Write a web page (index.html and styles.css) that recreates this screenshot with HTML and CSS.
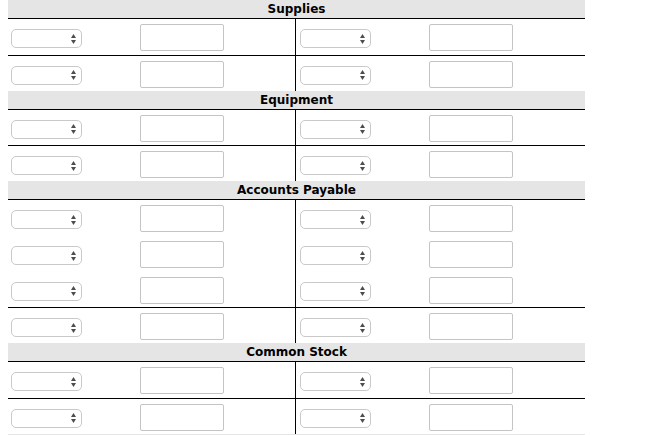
FILE: index.html
```html
<!DOCTYPE html>
<html lang="en">
<head>
<meta charset="utf-8">
<title>Journal entries</title>
<link rel="stylesheet" href="styles.css">
</head>
<body>
<div class="sheet">
  <section class="account">
    <div class="acct-head">Supplies</div>
    <div class="line">
      <div class="half"><div class="picker"><svg class="arrows" viewBox="0 0 5 10" width="5" height="10"><path d="M0 4 L2.5 0 L5 4 Z M0 6 L5 6 L2.5 10 Z"/></svg></div><input class="amount" type="text"></div>
      <div class="half"><div class="picker"><svg class="arrows" viewBox="0 0 5 10" width="5" height="10"><path d="M0 4 L2.5 0 L5 4 Z M0 6 L5 6 L2.5 10 Z"/></svg></div><input class="amount" type="text"></div>
    </div>
    <div class="line rule">
      <div class="half"><div class="picker"><svg class="arrows" viewBox="0 0 5 10" width="5" height="10"><path d="M0 4 L2.5 0 L5 4 Z M0 6 L5 6 L2.5 10 Z"/></svg></div><input class="amount" type="text"></div>
      <div class="half"><div class="picker"><svg class="arrows" viewBox="0 0 5 10" width="5" height="10"><path d="M0 4 L2.5 0 L5 4 Z M0 6 L5 6 L2.5 10 Z"/></svg></div><input class="amount" type="text"></div>
    </div>
  </section>

  <section class="account">
    <div class="acct-head">Equipment</div>
    <div class="line">
      <div class="half"><div class="picker"><svg class="arrows" viewBox="0 0 5 10" width="5" height="10"><path d="M0 4 L2.5 0 L5 4 Z M0 6 L5 6 L2.5 10 Z"/></svg></div><input class="amount" type="text"></div>
      <div class="half"><div class="picker"><svg class="arrows" viewBox="0 0 5 10" width="5" height="10"><path d="M0 4 L2.5 0 L5 4 Z M0 6 L5 6 L2.5 10 Z"/></svg></div><input class="amount" type="text"></div>
    </div>
    <div class="line rule">
      <div class="half"><div class="picker"><svg class="arrows" viewBox="0 0 5 10" width="5" height="10"><path d="M0 4 L2.5 0 L5 4 Z M0 6 L5 6 L2.5 10 Z"/></svg></div><input class="amount" type="text"></div>
      <div class="half"><div class="picker"><svg class="arrows" viewBox="0 0 5 10" width="5" height="10"><path d="M0 4 L2.5 0 L5 4 Z M0 6 L5 6 L2.5 10 Z"/></svg></div><input class="amount" type="text"></div>
    </div>
  </section>

  <section class="account">
    <div class="acct-head">Accounts Payable</div>
    <div class="line">
      <div class="half"><div class="picker"><svg class="arrows" viewBox="0 0 5 10" width="5" height="10"><path d="M0 4 L2.5 0 L5 4 Z M0 6 L5 6 L2.5 10 Z"/></svg></div><input class="amount" type="text"></div>
      <div class="half"><div class="picker"><svg class="arrows" viewBox="0 0 5 10" width="5" height="10"><path d="M0 4 L2.5 0 L5 4 Z M0 6 L5 6 L2.5 10 Z"/></svg></div><input class="amount" type="text"></div>
    </div>
    <div class="line">
      <div class="half"><div class="picker"><svg class="arrows" viewBox="0 0 5 10" width="5" height="10"><path d="M0 4 L2.5 0 L5 4 Z M0 6 L5 6 L2.5 10 Z"/></svg></div><input class="amount" type="text"></div>
      <div class="half"><div class="picker"><svg class="arrows" viewBox="0 0 5 10" width="5" height="10"><path d="M0 4 L2.5 0 L5 4 Z M0 6 L5 6 L2.5 10 Z"/></svg></div><input class="amount" type="text"></div>
    </div>
    <div class="line">
      <div class="half"><div class="picker"><svg class="arrows" viewBox="0 0 5 10" width="5" height="10"><path d="M0 4 L2.5 0 L5 4 Z M0 6 L5 6 L2.5 10 Z"/></svg></div><input class="amount" type="text"></div>
      <div class="half"><div class="picker"><svg class="arrows" viewBox="0 0 5 10" width="5" height="10"><path d="M0 4 L2.5 0 L5 4 Z M0 6 L5 6 L2.5 10 Z"/></svg></div><input class="amount" type="text"></div>
    </div>
    <div class="line rule">
      <div class="half"><div class="picker"><svg class="arrows" viewBox="0 0 5 10" width="5" height="10"><path d="M0 4 L2.5 0 L5 4 Z M0 6 L5 6 L2.5 10 Z"/></svg></div><input class="amount" type="text"></div>
      <div class="half"><div class="picker"><svg class="arrows" viewBox="0 0 5 10" width="5" height="10"><path d="M0 4 L2.5 0 L5 4 Z M0 6 L5 6 L2.5 10 Z"/></svg></div><input class="amount" type="text"></div>
    </div>
  </section>

  <section class="account">
    <div class="acct-head">Common Stock</div>
    <div class="line">
      <div class="half"><div class="picker"><svg class="arrows" viewBox="0 0 5 10" width="5" height="10"><path d="M0 4 L2.5 0 L5 4 Z M0 6 L5 6 L2.5 10 Z"/></svg></div><input class="amount" type="text"></div>
      <div class="half"><div class="picker"><svg class="arrows" viewBox="0 0 5 10" width="5" height="10"><path d="M0 4 L2.5 0 L5 4 Z M0 6 L5 6 L2.5 10 Z"/></svg></div><input class="amount" type="text"></div>
    </div>
    <div class="line rule">
      <div class="half"><div class="picker"><svg class="arrows" viewBox="0 0 5 10" width="5" height="10"><path d="M0 4 L2.5 0 L5 4 Z M0 6 L5 6 L2.5 10 Z"/></svg></div><input class="amount" type="text"></div>
      <div class="half"><div class="picker"><svg class="arrows" viewBox="0 0 5 10" width="5" height="10"><path d="M0 4 L2.5 0 L5 4 Z M0 6 L5 6 L2.5 10 Z"/></svg></div><input class="amount" type="text"></div>
    </div>
  </section>

  <section class="account">
    <div class="acct-head">&nbsp;</div>
  </section>
</div>
</body>
</html>
```

FILE: styles.css
```css
html, body {
  margin: 0;
  padding: 0;
  background: #ffffff;
}

body {
  padding: 0 8px;
  font-family: "DejaVu Sans", Verdana, sans-serif;
  color: #000;
}

.sheet {
  width: 577px;
  display: flex;
  flex-direction: column;
}

.account {
  display: flex;
  flex-direction: column;
}

.acct-head {
  height: 18px;
  line-height: 19px;
  background: #e5e5e5;
  border-bottom: 1px solid #000;
  text-align: center;
  font-weight: bold;
  font-size: 12px;
}

.line {
  display: grid;
  grid-template-columns: 288px 289px;
  height: 35.75px;
  box-sizing: border-box;
}

.line.rule {
  border-top: 1px solid #000;
}

.half {
  display: grid;
  grid-template-columns: 71px 84px;
  column-gap: 58px;
  align-items: center;
  padding-left: 3px;
  padding-top: 2px;
}

.half:first-child {
  border-right: 1px solid #000;
}

.half + .half {
  padding-left: 4px;
}

.picker {
  box-sizing: border-box;
  height: 19px;
  margin-top: 2px;
  border: 1px solid #c9c9c9;
  border-radius: 5px;
  background: #fff;
  display: flex;
  align-items: center;
  justify-content: flex-end;
  padding-right: 5px;
}

.arrows {
  display: block;
  fill: #4d4d4d;
}

.amount {
  box-sizing: border-box;
  width: 84px;
  height: 27px;
  margin: 0;
  padding: 0 4px;
  border: 1px solid #c4c4c4;
  border-radius: 2px;
  background: #fff;
  font: 12px "DejaVu Sans", sans-serif;
  outline: none;
}
```
